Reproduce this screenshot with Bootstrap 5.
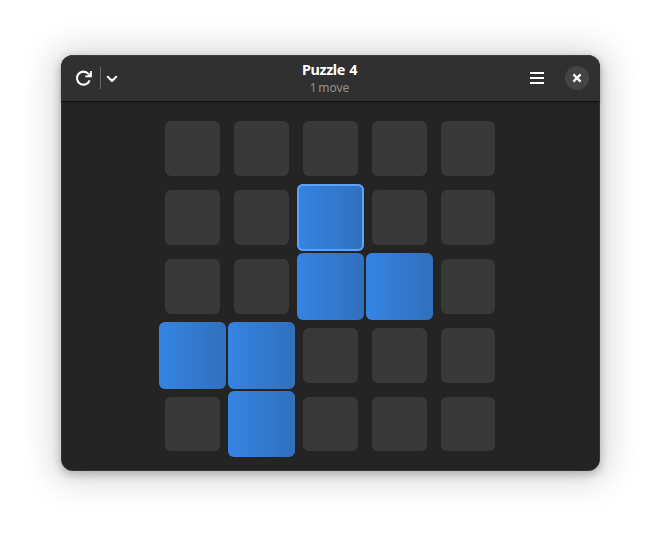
<!DOCTYPE html>
<html lang="en">
<head>
<meta charset="utf-8">
<title>Puzzle 4</title>
<link href="https://cdn.jsdelivr.net/npm/bootstrap@5.3.0/dist/css/bootstrap.min.css" rel="stylesheet">
<style>
body { height: 538px; padding: 55px 61px 0; background: #fff; font-family: "Noto Sans", sans-serif; overflow: hidden; }
.app-window { width: 539px; height: 416px; border-radius: 12px; background: #242424;
  box-shadow: inset 0 0 0 1px rgba(255,255,255,.07), 0 3px 9px 1px rgba(0,0,0,.22), 0 2px 32px 10px rgba(0,0,0,.14); }
.header-bar { height: 46px; padding: 0 11px; background: #303030; border-radius: 12px 12px 0 0;
  box-shadow: inset 0 1px rgba(255,255,255,.07), 0 1px rgba(0,0,0,.36), 0 2px 3px rgba(0,0,0,.16); }
.side { width: 120px; }
.titles { padding: 2px 2px 0 0; }
.tool { padding: 0; border: 0; background: none; color: #fff; line-height: 0; }
.tool svg { display: block; }
.split { width: 1px; height: 22px; margin-left: 4px; background: #686868; }
.title-main { font-size: 14.4px; font-weight: 700; line-height: 18px; letter-spacing: -.4px; word-spacing: .9px; color: #fff; }
.title-sub { font-size: 12px; line-height: 18px; word-spacing: -1.5px; color: #929292; }
.close-btn { width: 24px; height: 24px; margin-left: 20px; border-radius: 50%; background: #444; }
.board { grid-template-columns: repeat(4, 69px) 68px; grid-template-rows: repeat(4, 69px) 68px; margin: 13px 0 0 97px; width: 344px; }
.tile { margin: 7px; border: 0; padding: 0; border-radius: 6px; background: #393939; }
.tile.lit { margin: 1px; background: linear-gradient(to right, #3584e4, #3070bc); }
.tile.current { box-shadow: inset 0 0 0 2px #5ea2f8; }
</style>
</head>
<body>
<main class="app-window">
  <header class="header-bar d-flex align-items-center justify-content-between">
    <div class="side d-flex align-items-center">
      <button class="tool" aria-label="Restart"><svg width="24" height="24" viewBox="0 0 24 24"><path d="M16.4 7.9A6.5 6.5 0 1 0 17.6 14.3" fill="none" stroke="currentColor" stroke-width="2.1"/><path d="M19.9 5V11.2H13.3V9.6H15.2L18.2 6.5V5Z" fill="currentColor"/></svg></button>
      <span class="split"></span>
      <button class="tool" aria-label="Puzzles"><svg width="24" height="24" viewBox="0 0 24 24"><path d="M6.8 10.8 11 15 15.2 10.8" fill="none" stroke="currentColor" stroke-width="2.1" stroke-linecap="round" stroke-linejoin="round"/></svg></button>
    </div>
    <div class="titles text-center">
      <div class="title-main">Puzzle 4</div>
      <div class="title-sub">1 move</div>
    </div>
    <div class="side d-flex align-items-center justify-content-end">
      <button class="tool" aria-label="Menu"><svg width="16" height="16" viewBox="0 0 16 16" shape-rendering="crispEdges"><path d="M1 2h14v2H1zM1 7h14v2H1zM1 12h14v2H1z" fill="currentColor"/></svg></button>
      <button class="tool close-btn" aria-label="Close"><svg width="24" height="24" viewBox="0 0 24 24"><path d="M8.4 8.4 15.6 15.6M15.6 8.4 8.4 15.6" stroke="currentColor" stroke-width="2.3"/></svg></button>
    </div>
  </header>
  <div class="board d-grid">
    <button class="tile"></button><button class="tile"></button><button class="tile"></button><button class="tile"></button><button class="tile"></button>
    <button class="tile"></button><button class="tile"></button><button class="tile lit current"></button><button class="tile"></button><button class="tile"></button>
    <button class="tile"></button><button class="tile"></button><button class="tile lit"></button><button class="tile lit"></button><button class="tile"></button>
    <button class="tile lit"></button><button class="tile lit"></button><button class="tile"></button><button class="tile"></button><button class="tile"></button>
    <button class="tile"></button><button class="tile lit"></button><button class="tile"></button><button class="tile"></button><button class="tile"></button>
  </div>
</main>
<script src="https://cdn.jsdelivr.net/npm/bootstrap@5.3.0/dist/js/bootstrap.bundle.min.js"></script>
</body>
</html>
